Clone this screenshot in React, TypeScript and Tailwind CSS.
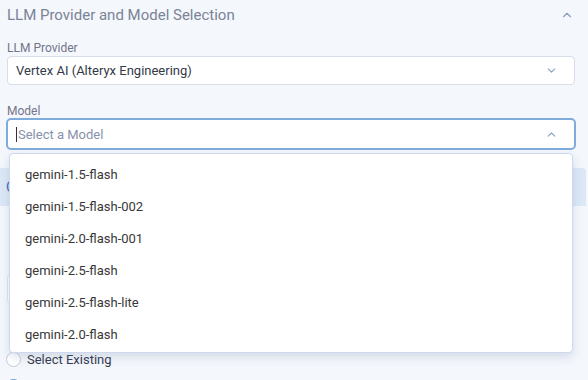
import { ChevronDown, ChevronUp } from "lucide-react";

const models = [
  "gemini-1.5-flash",
  "gemini-1.5-flash-002",
  "gemini-2.0-flash-001",
  "gemini-2.5-flash",
  "gemini-2.5-flash-lite",
  "gemini-2.0-flash",
];

export default function App() {
  return (
    <div className="relative w-[588px] h-[380px] overflow-hidden bg-[#f4f7fc] font-['Segoe_UI',Roboto,sans-serif] text-[#333a48]">
      {/* Section header */}
      <div className="flex items-center justify-between h-[30px] pl-[7px] pr-[14px]">
        <h2 className="text-[15px] text-[#7b8396] pt-[1px]">LLM Provider and Model Selection</h2>
        <ChevronUp className="w-[14px] h-[14px] text-[#8d9cbf]" strokeWidth={2} />
      </div>

      <div className="px-[7px] pr-[13px]">
        {/* Provider */}
        <div className="mt-[8px] h-[17px] flex items-end text-[12px] leading-[14px] text-[#74748a]">LLM Provider</div>
        <div className="mt-[1px] flex items-center justify-between h-[29px] bg-white border border-[#d8ddea] rounded-[4px] pl-[8px] pr-[16px]">
          <span className="text-[13px]">Vertex AI (Alteryx Engineering)</span>
          <ChevronDown className="w-[13px] h-[13px] text-[#8d9cbf]" strokeWidth={2} />
        </div>

        {/* Model */}
        <div className="mt-[16px] h-[17px] flex items-end text-[12px] leading-[14px] text-[#74748a]">Model</div>
        <div className="relative -mx-[1px]">
          <div className="flex items-center justify-between h-[32px] bg-white border-2 border-[#7fabdd] rounded-[5px] pl-[8px] pr-[16px]">
            <span className="text-[13px] text-[#8792ab] border-l border-[#333] pl-[1px] leading-[15px]">Select a Model</span>
            <ChevronUp className="w-[13px] h-[13px] text-[#8d9cbf]" strokeWidth={2} />
          </div>

          {/* Dropdown menu */}
          <ul className="absolute z-10 left-[3px] right-[3px] top-[35px] pt-[5px] pb-[1px] bg-white border border-[#cdd9ee] rounded-[4px] shadow-[0_4px_10px_rgba(120,135,170,0.25)]">
            {models.map((m) => (
              <li key={m} className="h-[32px] flex items-center pl-[15px] text-[13px] text-[#383838]">
                {m}
              </li>
            ))}
          </ul>
        </div>
      </div>

      {/* Content behind the menu */}
      <div className="mt-[18px] mr-[2px] h-[38px] bg-[#dce8f6] rounded-tr-[4px] flex items-center pl-[6px]">
        <span className="text-[14px] text-[#2f6db3]">C</span>
      </div>
      <div className="ml-[7px] mt-[68px] w-[40px] h-[30px] border border-[#e1e5ee] rounded-[4px] bg-white" />

      <div className="mt-[46px] flex items-center gap-[6px] pl-[6px]">
        <span className="w-[15px] h-[15px] rounded-full border border-[#c6cbd8] bg-white" />
        <span className="text-[13px] text-[#333a4d]">Select Existing</span>
      </div>
      <div className="mt-[9px] flex items-center pl-[6px]">
        <span className="w-[15px] h-[15px] rounded-full border border-[#5b8fd0] bg-white" />
      </div>
    </div>
  );
}
